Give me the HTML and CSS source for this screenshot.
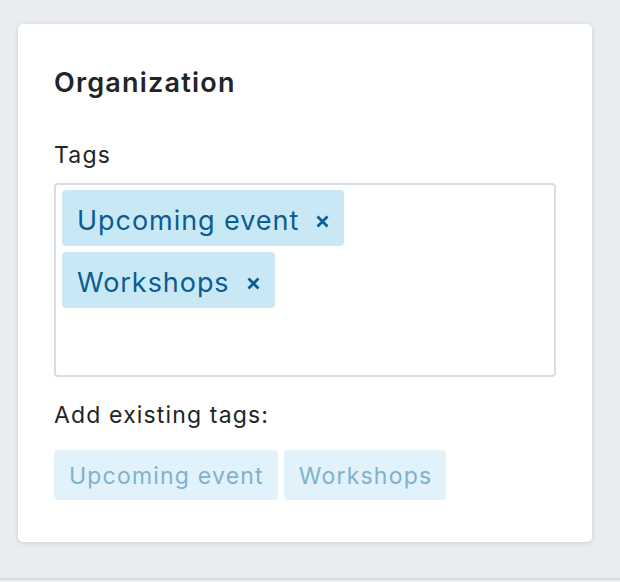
FILE: index.html
```html
<!DOCTYPE html>
<html lang="en">
<head>
<meta charset="utf-8">
<title>Organization</title>
<link rel="stylesheet" href="styles.css">
</head>
<body>
<div class="page">
  <section class="card">
    <h2 class="card-title">Organization</h2>
    <label class="field-label">Tags</label>
    <div class="tag-input">
      <span class="tag"><span class="tag-text">Upcoming event</span>
        <svg class="tag-x" viewBox="0 0 13 13" width="13" height="13"><path d="M1.5 1.5 L11.5 11.5 M11.5 1.5 L1.5 11.5"/></svg>
      </span>
      <span class="tag"><span class="tag-text">Workshops</span>
        <svg class="tag-x" viewBox="0 0 13 13" width="13" height="13"><path d="M1.5 1.5 L11.5 11.5 M11.5 1.5 L1.5 11.5"/></svg>
      </span>
    </div>
    <p class="field-label existing-label">Add existing tags:</p>
    <div class="suggestions">
      <span class="chip">Upcoming event</span>
      <span class="chip">Workshops</span>
    </div>
  </section>
</div>
</body>
</html>
```

FILE: styles.css
```css
html, body {
  margin: 0;
  padding: 0;
}
body {
  background: #e9edf0;
  font-family: Inter, "Noto Sans", sans-serif;
  color: #222426;
  width: 620px;
  height: 582px;
  overflow: hidden;
}
.page {
  box-sizing: border-box;
  height: 580px;
  padding: 24px 28px 0 18px;
  border-bottom: 2px solid #d5dde4;
}
.card {
  background: #fff;
  border-radius: 5px;
  box-shadow: 0 1px 4px rgba(30, 45, 60, 0.16);
  padding: 43px 36px 42px 36px;
}
.card-title {
  margin: 0;
  font-size: 27px;
  line-height: 32px;
  font-weight: 600;
  letter-spacing: 1.2px;
}
.field-label {
  display: block;
  margin: 42px 0 0 0;
  font-size: 23px;
  line-height: 28px;
  font-weight: 400;
  letter-spacing: 1.15px;
}
.tag-input {
  margin-top: 14px;
  box-sizing: border-box;
  height: 194px;
  border: 2px solid #d5dee5;
  border-radius: 4px;
  padding: 5px 6px;
  display: flex;
  flex-direction: column;
  align-items: flex-start;
  gap: 6px;
}
.tag {
  display: flex;
  align-items: center;
  gap: 17px;
  background: #c9e8f5;
  color: #0b5c91;
  border-radius: 4px;
  font-size: 27px;
  line-height: 32px;
  letter-spacing: 0.95px;
  padding: 15px 15px 9px 15px;
}
.tag-x {
  fill: none;
  stroke: #0b5c91;
  stroke-width: 2.7;
  margin-top: 0;
}
.existing-label {
  margin-top: 24px;
}
.suggestions {
  display: flex;
  gap: 6px;
  margin-top: 21px;
}
.chip {
  background: #e2f2fa;
  color: #7fb1cf;
  border-radius: 4px;
  font-size: 23px;
  line-height: 28px;
  letter-spacing: 1.2px;
  padding: 12px 14px 10px 15px;
}
```
